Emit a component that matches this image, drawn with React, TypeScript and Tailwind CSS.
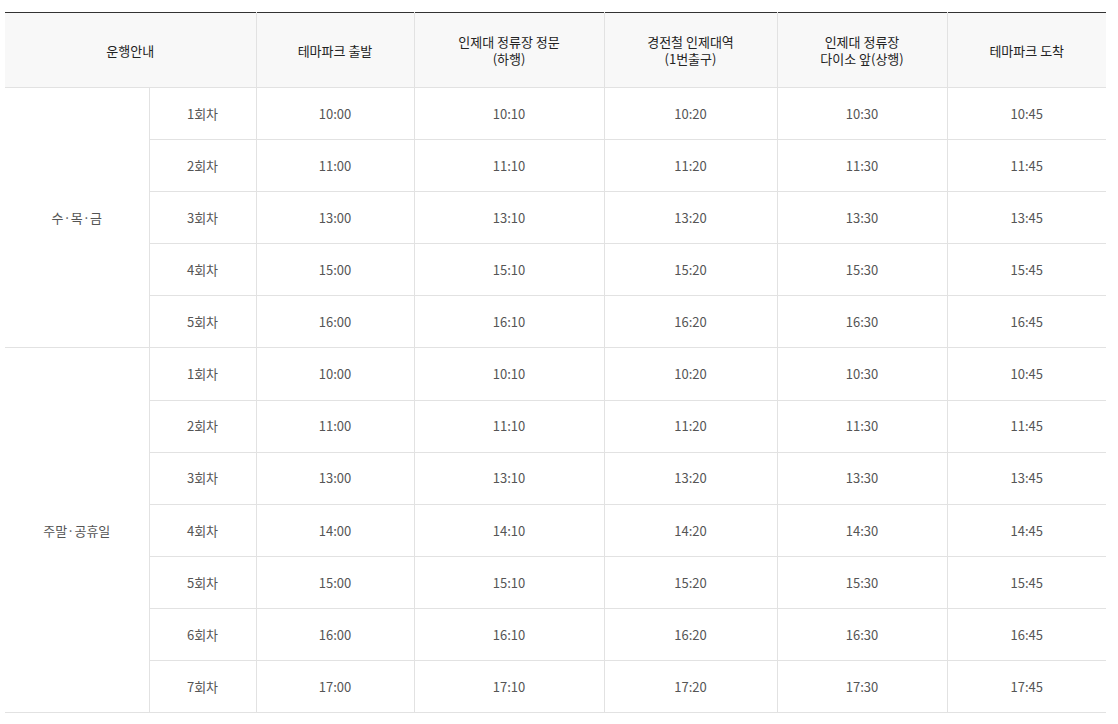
import React from "react";

const headers: React.ReactNode[] = [
  "테마파크 출발",
  <>인제대 정류장 정문<br />(하행)</>,
  <>경전철 인제대역<br />(1번출구)</>,
  <>인제대 정류장<br />다이소 앞(상행)</>,
  "테마파크 도착",
];

const weekday = [
  ["10:00", "10:10", "10:20", "10:30", "10:45"],
  ["11:00", "11:10", "11:20", "11:30", "11:45"],
  ["13:00", "13:10", "13:20", "13:30", "13:45"],
  ["15:00", "15:10", "15:20", "15:30", "15:45"],
  ["16:00", "16:10", "16:20", "16:30", "16:45"],
];

const weekend = [
  ["10:00", "10:10", "10:20", "10:30", "10:45"],
  ["11:00", "11:10", "11:20", "11:30", "11:45"],
  ["13:00", "13:10", "13:20", "13:30", "13:45"],
  ["14:00", "14:10", "14:20", "14:30", "14:45"],
  ["15:00", "15:10", "15:20", "15:30", "15:45"],
  ["16:00", "16:10", "16:20", "16:30", "16:45"],
  ["17:00", "17:10", "17:20", "17:30", "17:45"],
];

function Group({ label, rows }: { label: string; rows: string[][] }) {
  return (
    <>
      {rows.map((r, i) => (
        <tr key={i} className="h-[52.1px]">
          {i === 0 && (
            <td
              rowSpan={rows.length}
              className="border-b border-r border-[#e2e2e2] text-center align-middle"
            >
              {label}
            </td>
          )}
          <td className="border-b border-r border-[#e2e2e2] text-center">{i + 1}회차</td>
          {r.map((t, j) => (
            <td
              key={j}
              className={`border-b border-[#e2e2e2] text-center ${j < r.length - 1 ? "border-r" : ""}`}
            >
              {t}
            </td>
          ))}
        </tr>
      ))}
    </>
  );
}

export default function App() {
  return (
    <div
      className="w-[1118px] h-[724px] bg-white pt-[12px] pl-[5px]"
      style={{ fontFamily: '"Noto Sans CJK KR", "Noto Sans", sans-serif' }}
    >
      <table className="w-[1101px] table-fixed border-collapse text-[13px] text-[#555]">
        <colgroup>
          <col className="w-[144px]" />
          <col className="w-[107px]" />
          <col className="w-[158px]" />
          <col className="w-[190px]" />
          <col className="w-[173px]" />
          <col className="w-[170px]" />
          <col className="w-[159px]" />
        </colgroup>
        <thead>
          <tr className="h-[75px] border-t border-[#333] bg-[#f8f8f8]">
            <th
              colSpan={2}
              className="border-b border-r border-[#e2e2e2] font-normal text-[#222] leading-[17px]"
            >
              운행안내
            </th>
            {headers.map((h, i) => (
              <th
                key={i}
                className={`border-b border-[#e2e2e2] font-normal text-[#222] leading-[17px] ${i < headers.length - 1 ? "border-r" : ""}`}
              >
                {h}
              </th>
            ))}
          </tr>
        </thead>
        <tbody>
          <Group label="수·목·금" rows={weekday} />
          <Group label="주말·공휴일" rows={weekend} />
        </tbody>
      </table>
    </div>
  );
}
